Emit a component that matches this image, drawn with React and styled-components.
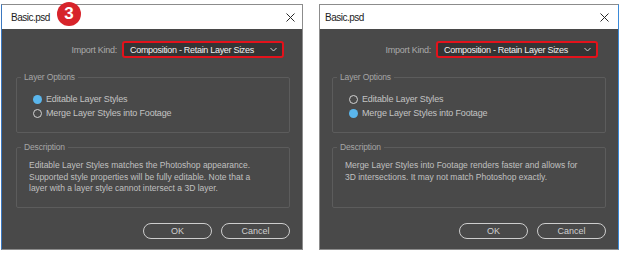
import React from "react";
import styled, { createGlobalStyle } from "styled-components";

const GlobalStyle = createGlobalStyle`
  html, body { margin: 0; padding: 0; background: #ffffff; }
  body { font-family: "Liberation Sans", Arial, sans-serif; }
  * { box-sizing: border-box; }
`;

const Page = styled.div`
  display: flex;
  align-items: flex-start;
  gap: 16px;
  width: 626px;
  height: 254px;
  padding: 4px 0 0 1px;
  background: #ffffff;
`;

const Dialog = styled.section`
  position: relative;
  width: ${(p) => p.$w}px;
  height: 246px;
  display: flex;
  flex-direction: column;
  border: 1px solid #8c8c8c;
  border-left-color: ${(p) => (p.$accent === "left" ? "#3b78c0" : "#8c8c8c")};
  border-right-color: ${(p) => (p.$accent === "right" ? "#3b8ad8" : "#8c8c8c")};
  background: #494949;
  white-space: nowrap;
`;

const TitleBar = styled.header`
  height: 24px;
  flex: none;
  display: flex;
  align-items: center;
  justify-content: space-between;
  padding: 0 ${(p) => p.$padR}px 0 ${(p) => p.$pad}px;
  background: #ffffff;
  color: #1c1c1c;
  font-size: 10px;
  letter-spacing: -0.5px;
`;

const CloseIcon = styled.svg`
  width: 9px;
  height: 9px;
`;

const Badge = styled.div`
  position: absolute;
  left: 55px;
  top: -3px;
  width: 24px;
  height: 24px;
  border-radius: 50%;
  background: #d7242b;
  color: #ffffff;
  display: flex;
  align-items: center;
  justify-content: center;
  font-weight: 700;
  font-size: 17px;
`;

const Body = styled.div`
  flex: 1;
  display: flex;
  flex-direction: column;
  padding: 12px 12px 10px ${(p) => p.$padL}px;
  font-size: 8.5px;
  letter-spacing: -0.15px;
`;

const KindRow = styled.div`
  display: flex;
  justify-content: flex-end;
  align-items: center;
  gap: 5px;
  padding-right: ${(p) => p.$padR}px;
  height: 17px;
`;

const KindLabel = styled.span`
  color: #a9a9a9;
  font-size: 9px;
  letter-spacing: -0.25px;
`;

const Select = styled.div`
  width: 162px;
  height: 17px;
  display: flex;
  align-items: center;
  justify-content: space-between;
  padding: 0 5px 0 6px;
  border: 2px solid #e3121b;
  border-radius: 3px;
  background: #343434;
  color: #f0f0f0;
  font-size: 9px;
  letter-spacing: -0.3px;
`;

const Chevron = styled.svg`
  width: 7px;
  height: 5px;
`;

const Group = styled.fieldset`
  margin: ${(p) => p.$mt}px 0 0;
  padding: 0;
  height: ${(p) => p.$h}px;
  border: 1px solid #5c5c5c;
  border-radius: 2px;
  min-width: 0;
`;

const Legend = styled.legend`
  margin-left: 4px;
  padding: 0 3px;
  line-height: 11px;
  color: #a6a6a6;
  font-size: 8.5px;
`;

const GroupContent = styled.div`
  padding: ${(p) => p.$pt}px 8px 0 ${(p) => p.$pl}px;
`;

const RadioRow = styled.label`
  display: flex;
  align-items: center;
  gap: 4px;
  height: 14px;
  color: #c3c3c3;
  font-size: 9px;
`;

const RadioDot = styled.span`
  width: 9px;
  height: 9px;
  border-radius: 50%;
  flex: none;
  background: ${(p) => (p.$on ? "#5ab6ec" : "transparent")};
  border: ${(p) => (p.$on ? "none" : "1.6px solid #d2d2d2")};
`;

const DescText = styled.p`
  margin: 0;
  color: #c0c0c0;
  line-height: 11.5px;
  letter-spacing: 0;
`;

const ButtonRow = styled.div`
  display: flex;
  justify-content: flex-end;
  gap: 9px;
  margin-top: 15px;
`;

const Button = styled.button`
  width: 69px;
  height: 16px;
  padding: 0;
  border: 1px solid #cdcdcd;
  border-radius: 8px;
  background: transparent;
  color: #d0d0d0;
  font-family: inherit;
  font-size: 9px;
  letter-spacing: 0;
`;

function ImportDialog({ w, accent, titlePad, titlePadR, padL, kindPadR, badge, selected, description }) {
  return (
    <Dialog $w={w} $accent={accent}>
      <TitleBar $pad={titlePad} $padR={titlePadR}>
        <span>Basic.psd</span>
        <CloseIcon viewBox="0 0 9 9">
          <path d="M0.5 0.5 L8.5 8.5 M8.5 0.5 L0.5 8.5" stroke="#2a2a2a" strokeWidth="1" fill="none" />
        </CloseIcon>
      </TitleBar>
      {badge && <Badge>{badge}</Badge>}
      <Body $padL={padL}>
        <KindRow $padR={kindPadR}>
          <KindLabel>Import Kind:</KindLabel>
          <Select>
            <span>Composition - Retain Layer Sizes</span>
            <Chevron viewBox="0 0 7 5">
              <path d="M0.5 1 L3.5 4 L6.5 1" fill="none" stroke="#cfcfcf" strokeWidth="1" />
            </Chevron>
          </Select>
        </KindRow>
        <Group $mt={14} $h={61}>
          <Legend>Layer Options</Legend>
          <GroupContent $pt={9} $pl={16}>
            <RadioRow>
              <RadioDot $on={selected === 0} />
              Editable Layer Styles
            </RadioRow>
            <RadioRow>
              <RadioDot $on={selected === 1} />
              Merge Layer Styles into Footage
            </RadioRow>
          </GroupContent>
        </Group>
        <Group $mt={9} $h={66}>
          <Legend>Description</Legend>
          <GroupContent $pt={7} $pl={12}>
            <DescText>{description}</DescText>
          </GroupContent>
        </Group>
        <ButtonRow>
          <Button>OK</Button>
          <Button>Cancel</Button>
        </ButtonRow>
      </Body>
    </Dialog>
  );
}

export default function App() {
  return (
    <>
      <GlobalStyle />
      <Page>
        <ImportDialog
          w={302}
          accent="left"
          titlePad={9}
          titlePadR={7}
          padL={14}
          kindPadR={6}
          badge="3"
          selected={0}
          description={
            <>
              Editable Layer Styles matches the Photoshop appearance.
              <br />
              Supported style properties will be fully editable. Note that a
              <br />
              layer with a layer style cannot intersect a 3D layer.
            </>
          }
        />
        <ImportDialog
          w={300}
          accent="right"
          titlePad={5}
          titlePadR={9}
          padL={12}
          kindPadR={8}
          selected={1}
          description={
            <>
              Merge Layer Styles into Footage renders faster and allows for
              <br />
              3D intersections. It may not match Photoshop exactly.
            </>
          }
        />
      </Page>
    </>
  );
}
